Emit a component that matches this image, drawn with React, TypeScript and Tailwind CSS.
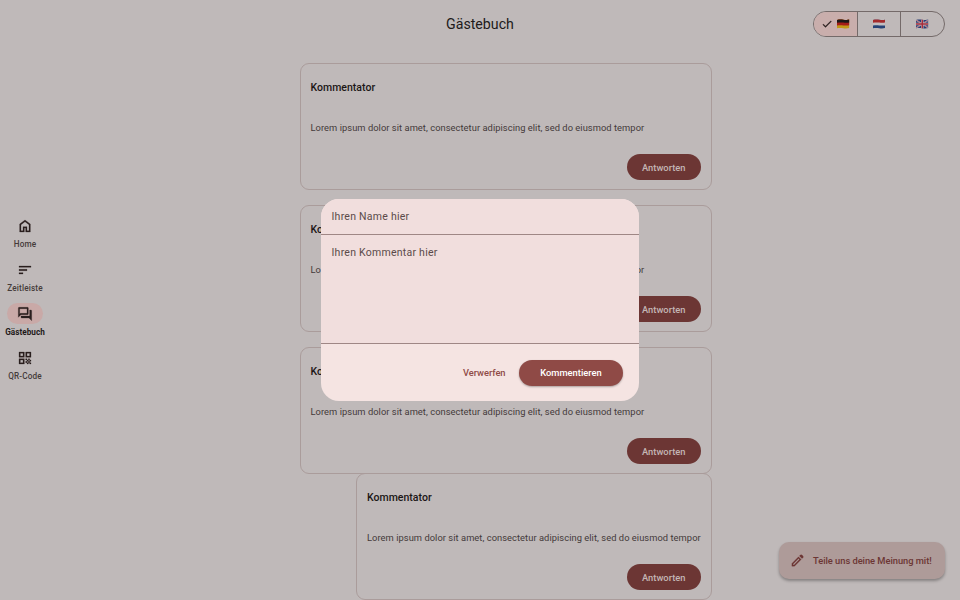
import React from "react";

const BODY = "Lorem ipsum dolor sit amet, consectetur adipiscing elit, sed do eiusmod tempor";

function Icon({ d, className }: { d: string; className: string }) {
  return (
    <svg viewBox="0 0 24 24" className={className} fill="currentColor" stroke="currentColor" strokeWidth="0.4" aria-hidden="true">
      <path d={d} />
    </svg>
  );
}

const ICONS = {
  home: "M6 19h3v-6h6v6h3v-9l-6-4.5L6 10v9zm-2 2V9l8-6 8 6v12h-7v-6h-2v6H4z",
  sort: "M3 18h6v-2H3v2zM3 6v2h18V6H3zm0 7h12v-2H3v2z",
  forum:
    "M15 4v7H5.17L4 12.17V4h11m1-2H3c-.55 0-1 .45-1 1v14l4-4h10c.55 0 1-.45 1-1V3c0-.55-.45-1-1-1zm5 4h-2v9H6v2c0 .55.45 1 1 1h11l4 4V7c0-.55-.45-1-1-1z",
  qr: "M3 11h8V3H3v8zm2-6h4v4H5V5zM3 21h8v-8H3v8zm2-6h4v4H5v-4zM13 3v8h8V3h-8zm6 6h-4V5h4v4zM19 19h2v2h-2zM13 13h2v2h-2zM15 15h2v2h-2zM13 17h2v2h-2zM15 19h2v2h-2zM17 17h2v2h-2zM17 13h2v2h-2zM19 15h2v2h-2z",
  check: "M9 16.17 4.83 12l-1.42 1.41L9 19 21 7l-1.41-1.41z",
  edit: "M5 19h1.4l8.625-8.625-1.4-1.4L5 17.6V19zM19.3 8.925l-4.25-4.2 1.4-1.4q.575-.575 1.413-.575.837 0 1.412.575l1.4 1.4q.575.575.6 1.388.025.812-.55 1.387L19.3 8.925zM17.85 10.4 7.25 21H3v-4.25l10.6-10.6 4.25 4.25z",
};

const WAVE = "M0 .9C2 .4 4 .4 6 .7S10 1.1 12 .6V9C10 9.5 8 9.5 6 9.2S2 8.8 0 9.3Z";

function Flag({ kind }: { kind: "de" | "nl" | "gb" }) {
  const id = "flag-" + kind;
  return (
    <svg viewBox="0 0 12 10" preserveAspectRatio="none" className="h-[10px] w-[12.5px]" aria-hidden="true">
      <clipPath id={id}>
        <path d={WAVE} />
      </clipPath>
      <g clipPath={`url(#${id})`}>
        {kind === "de" && (
          <>
            <path d="M0 0h12v10H0z" fill="#c29a18" />
            <path d="M0 0H12V6.3C10 6.7 8 6.7 6 6.4S2 6.1 0 6.6Z" fill="#a51d18" />
            <path d="M0 0H12V3.5C10 3.9 8 3.9 6 3.6S2 3.3 0 3.8Z" fill="#1c1817" />
          </>
        )}
        {kind === "nl" && (
          <>
            <path d="M0 0h12v10H0z" fill="#254276" />
            <path d="M0 0H12V6.3C10 6.7 8 6.7 6 6.4S2 6.1 0 6.6Z" fill="#c2bfc1" />
            <path d="M0 0H12V3.5C10 3.9 8 3.9 6 3.6S2 3.3 0 3.8Z" fill="#a42b2c" />
          </>
        )}
        {kind === "gb" && (
          <>
            <path d="M0 0h12v10H0z" fill="#293e75" />
            <path d="M0 1l12 8M12 1 0 9" stroke="#bdbac0" strokeWidth="1.3" />
            <path d="M0 1l12 8M12 1 0 9" stroke="#a62c3b" strokeWidth=".5" />
            <path d="M6 0v10M0 5h12" stroke="#bdbac0" strokeWidth="2.4" />
            <path d="M6 0v10M0 5h12" stroke="#a62c3b" strokeWidth="1.4" />
          </>
        )}
      </g>
    </svg>
  );
}

function NavItem({ d, label, active }: { d: string; label: string; active?: boolean }) {
  return (
    <div className="flex h-11 w-[50px] flex-col items-center text-[#2b1f1e]">
      <div className={`flex h-[21px] w-9 items-center justify-center rounded-full ${active ? "bg-[#c9a9a7]" : ""}`}>
        <Icon d={d} className="h-4 w-4" />
      </div>
      <span
        className={`mt-[3px] whitespace-nowrap text-[8.2px] leading-[10px] ${
          active ? "font-bold tracking-[0.02px] text-[#1f1a19]" : "font-medium tracking-[0.16px] text-[#453b3a]"
        }`}
      >
        {label}
      </span>
    </div>
  );
}

function Comment({ nested }: { nested?: boolean }) {
  return (
    <article
      className={`flex h-[127px] shrink-0 flex-col rounded-[9px] border border-[#aa9c9b] px-[10px] ${
        nested ? "ml-[56.5px]" : ""
      }`}
    >
      <h2 className="mt-[17px] text-[10.5px] font-medium leading-[14px] tracking-[0.02px] text-[#1b1616]">Kommentator</h2>
      <p className="mt-[26px] whitespace-nowrap text-[9.33px] leading-[14px] tracking-[0.05px] text-[#443a39]">{BODY}</p>
      <button className="mt-[19px] h-[26px] w-[74.5px] self-end rounded-full bg-[#6c3634] pt-px text-[9.33px] font-medium tracking-[0.02px] text-[#c4b6b5]">
        Antworten
      </button>
    </article>
  );
}

export default function App() {
  return (
    <div className="relative flex h-[600px] w-[960px] overflow-hidden bg-[#bfb9b9] font-[Roboto,sans-serif]">
      <nav className="flex w-[50px] flex-col pt-[215px]">
        <NavItem d={ICONS.home} label="Home" />
        <NavItem d={ICONS.sort} label="Zeitleiste" />
        <NavItem d={ICONS.forum} label="Gästebuch" active />
        <NavItem d={ICONS.qr} label="QR-Code" />
      </nav>

      <div className="flex flex-1 flex-col">
        <header className="flex h-16 items-start">
          <div className="w-[396px]" />
          <h1 className="mt-3 text-[14.2px] leading-6 text-[#211a1a]">Gästebuch</h1>
          <div className="ml-auto mr-[15px] mt-[11px] flex h-[26px] w-[132px] overflow-hidden rounded-full border border-[#746a69]">
            <div className="flex w-[43.5px] shrink-0 items-center gap-1 border-r border-[#746a69] bg-[#c9aeac] pl-[7px] text-[#2b1f1e]">
              <Icon d={ICONS.check} className="h-3 w-3" />
              <Flag kind="de" />
            </div>
            <div className="flex w-[43.5px] shrink-0 items-center justify-center border-r border-[#746a69]">
              <Flag kind="nl" />
            </div>
            <div className="flex flex-1 items-center justify-center">
              <Flag kind="gb" />
            </div>
          </div>
        </header>
        <main className="ml-[249.5px] flex w-[412.5px] flex-col gap-[15px]">
          <Comment />
          <Comment />
          <div className="flex flex-col">
            <Comment />
            <div className="-mt-px flex flex-col">
              <Comment nested />
            </div>
          </div>
        </main>
      </div>

      <button className="absolute left-[779px] top-[542px] flex h-[37px] w-[166px] items-center rounded-[10px] bg-[#ae9b99] pl-[11px] text-[#6c3634] shadow-[0_2px_3px_rgba(0,0,0,0.3)]">
        <Icon d={ICONS.edit} className="h-[15px] w-[15px]" />
        <span className="ml-2 whitespace-nowrap pt-px text-[9.33px] font-medium tracking-[-0.04px]">Teile uns deine Meinung mit!</span>
      </button>

      <section className="absolute left-[321px] top-[199px] flex h-[202px] w-[318px] flex-col overflow-hidden rounded-[18px] bg-[#f5e4e2]">
        <div className="h-9 border-b border-[#9f8785] bg-[#f1dedd] pl-[10.5px] pt-[11px] text-[10.5px] leading-[14px] tracking-[0.25px] text-[#5b4b4a]">
          Ihren Name hier
        </div>
        <div className="h-[109px] border-b border-[#9f8785] bg-[#f1dedd] pl-[10.5px] pt-[11px] text-[10.5px] leading-[14px] tracking-[0.25px] text-[#5b4b4a]">
          Ihren Kommentar hier
        </div>
        <div className="flex flex-1 items-center justify-end pr-4">
          <button className="mr-[13.5px] pt-px text-[9.33px] font-medium tracking-[-0.04px] text-[#8f4b47]">Verwerfen</button>
          <button className="h-[26px] w-[104px] rounded-full bg-[#8f4a46] pt-px text-[9.33px] font-medium text-white shadow-[0_1px_2px_rgba(0,0,0,0.3)]">
            Kommentieren
          </button>
        </div>
      </section>
    </div>
  );
}
